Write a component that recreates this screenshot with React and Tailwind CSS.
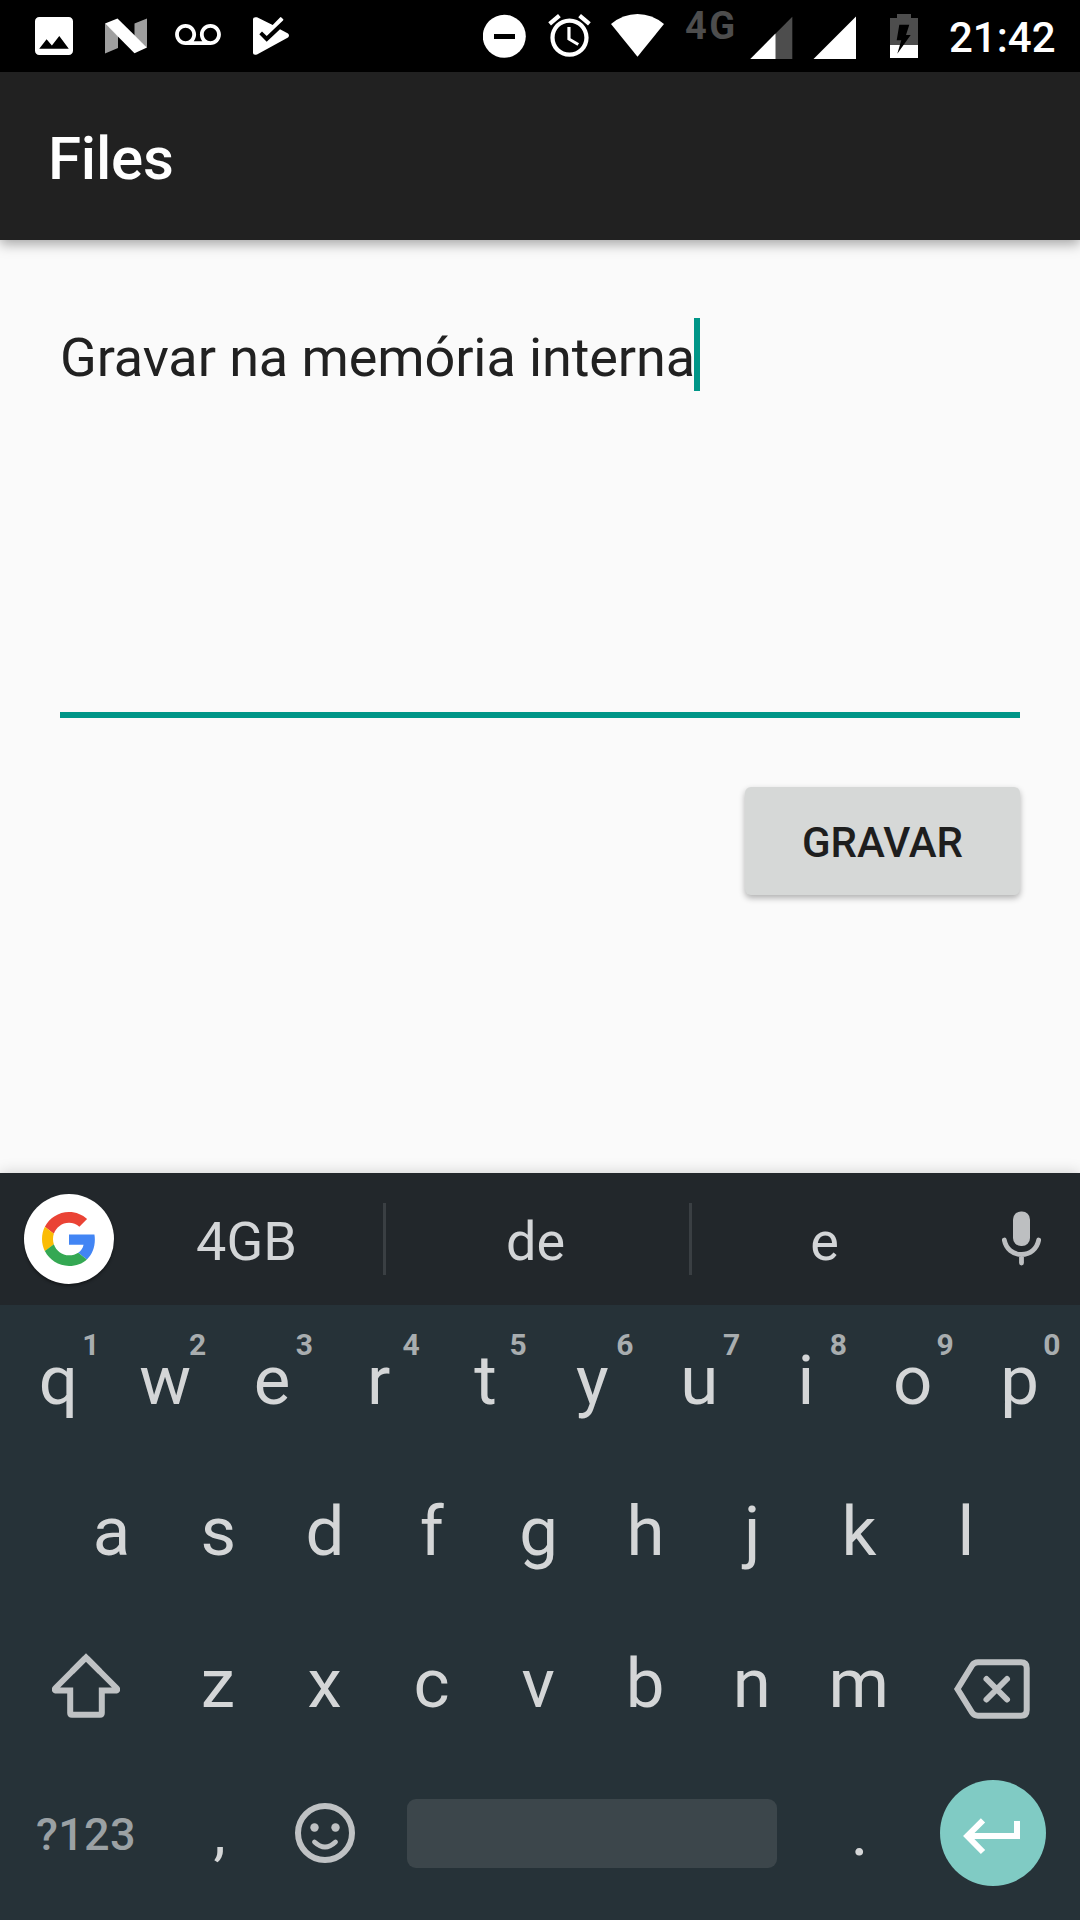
import React from "react";

const ROW1 = ["q", "w", "e", "r", "t", "y", "u", "i", "o", "p"];
const HINTS = ["1", "2", "3", "4", "5", "6", "7", "8", "9", "0"];
const ROW2 = ["a", "s", "d", "f", "g", "h", "j", "k", "l"];
const ROW3 = ["z", "x", "c", "v", "b", "n", "m"];

function StatusBar() {
  return (
    <div className="flex h-[72px] w-full items-start bg-black text-white">
      <svg className="mt-[17px] ml-[35px] size-[38px] shrink-0" viewBox="3 3 18 18" fill="#fff">
        <path d="M21 19V5c0-1.1-.9-2-2-2H5c-1.1 0-2 .9-2 2v14c0 1.1.9 2 2 2h14c1.1 0 2-.9 2-2zM8.500 13.500l2.500 3.010L14.500 12l4.500 6H5l3.500-4.500z" />
      </svg>
      <svg className="mt-[18px] ml-[32px] h-[36px] w-[42px] shrink-0" viewBox="0 0 42 36">
        <path d="M0 5.500L13 18v12L0 35.500zM29.500 5.500L42 .5v29L29.500 18z" fill="#9e9e9e" />
        <path d="M0 5.500L12.500 .5L42 29.500L29.500 35.300z" fill="#fff" />
      </svg>
      <svg className="mt-[24px] ml-[28px] h-[21px] w-[46px] shrink-0" viewBox="0 6 24 11" fill="#fff">
        <path d="M18.500 6C15.460 6 13 8.460 13 11.500c0 1.330.47 2.550 1.260 3.500H9.740c.79-.95 1.260-2.170 1.260-3.500C11 8.460 8.540 6 5.500 6S0 8.460 0 11.500 2.460 17 5.500 17h13c3.040 0 5.500-2.460 5.500-5.500S21.540 6 18.500 6zm-13 9C3.570 15 2 13.430 2 11.500S3.570 8 5.500 8 9 9.570 9 11.500 7.430 15 5.500 15zm13 0c-1.930 0-3.500-1.570-3.500-3.500S16.570 8 18.500 8 22 9.570 22 11.500 20.430 15 18.500 15z" />
      </svg>
      <svg className="mt-[17px] ml-[32px] h-[38px] w-[37px] shrink-0" viewBox="0 0 37 38">
        <path d="M0 2Q0 -.3 4 .3L19.700 8L27 .5Q27.700 -.3 28.400 .5L30 2Q30.700 2.700 30 3.400L13.700 19L9 14.500L6.300 17.200L13.700 24.700L27 12.300L35 16.500Q37 18.500 35 20.500L4 37.500Q0 38.500 0 36z" fill="#fff" />
      </svg>
      <svg className="mt-[14px] ml-[193px] size-[44px] shrink-0" viewBox="0 0 44 44">
        <circle cx="21.300" cy="22.300" r="21.500" fill="#fff" />
        <path d="M11 20h21v5H11z" fill="#000" />
      </svg>
      <svg className="mt-[10px] ml-[17px] size-[51px] shrink-0" viewBox="0 0 24 24" fill="#fff">
        <path d="M22 5.720l-4.600-3.860-1.290 1.530 4.600 3.860L22 5.720zM7.880 3.390L6.600 1.860 2 5.710l1.290 1.530 4.590-3.850zM12.500 8H11v6l4.750 2.850.75-1.230-4-2.370V8zM12 4c-4.970 0-9 4.030-9 9s4.020 9 9 9c4.970 0 9-4.030 9-9s-4.030-9-9-9zm0 16c-3.870 0-7-3.130-7-7s3.130-7 7-7 7 3.130 7 7-3.130 7-7 7z" />
      </svg>
      <svg className="mt-[14px] ml-[16px] h-[43px] w-[53px] shrink-0" viewBox="0 0 53 43">
        <path d="M0 10Q12 0 26.500 0T53 10L26.500 42.800z" fill="#fff" />
      </svg>
      <span className="mt-[4px] ml-[21px] w-[64px] shrink-0 text-[38px] leading-[45px] font-bold tracking-[2.500px] text-[#4d4d4d]">4G</span>
      <svg className="mt-[16px] h-[43px] w-[44px] shrink-0" viewBox="0 0 44 43">
        <path d="M1.300 43L43.300 .7V43z" fill="#4d4d4d" />
        <path d="M1.300 43L26.500 17.500V43z" fill="#fff" />
      </svg>
      <svg className="mt-[16px] ml-[20px] h-[43px] w-[43px] shrink-0" viewBox="0 0 43 43">
        <path d="M.5 43L43 .5V43z" fill="#fff" />
      </svg>
      <svg className="mt-[14px] ml-[34px] h-[44px] w-[28px] shrink-0" viewBox="0 0 28 44">
        <path d="M0 4h7V0h14v4h7v27H0z" fill="#4d4d4d" />
        <path d="M0 31h28v13H0z" fill="#fff" />
        <path d="M9.300 10.700H19.300L16 21H20.700L7.300 39.700L11.300 26.300H6.700z" fill="#000" />
      </svg>
      <span className="mt-[13px] ml-[31px] text-[42px] leading-[50px] font-medium">21:42</span>
    </div>
  );
}

function GoogleG() {
  return (
    <svg className="h-[54px] w-[54px]" viewBox="0 0 48 48">
      <path fill="#EA4335" d="M24 9.500c3.540 0 6.710 1.220 9.210 3.600l6.850-6.850C35.900 2.380 30.470 0 24 0 14.620 0 6.510 5.380 2.560 13.220l7.980 6.190C12.430 13.720 17.740 9.500 24 9.500z" />
      <path fill="#4285F4" d="M46.980 24.550c0-1.570-.15-3.090-.38-4.550H24v9.020h12.940c-.58 2.960-2.260 5.480-4.780 7.180l7.730 6c4.510-4.180 7.090-10.360 7.090-17.650z" />
      <path fill="#FBBC05" d="M10.530 28.590c-.48-1.450-.76-2.990-.76-4.590s.27-3.140.76-4.590l-7.980-6.190C.92 16.460 0 20.120 0 24c0 3.880.92 7.540 2.560 10.780l7.970-6.190z" />
      <path fill="#34A853" d="M24 48c6.480 0 11.930-2.130 15.890-5.810l-7.730-6c-2.150 1.450-4.920 2.300-8.160 2.300-6.260 0-11.570-4.220-13.470-9.910l-7.980 6.190C6.510 42.620 14.620 48 24 48z" />
    </svg>
  );
}

function Suggestions() {
  return (
    <div className="flex h-[132px] items-center bg-[#22272b] pl-[24px] text-[54px] leading-[64px] text-[#d3d5d7]">
      <div className="flex size-[90px] shrink-0 items-center justify-center rounded-full bg-white shadow-[0_2px_3px_rgba(0,0,0,0.4)]">
        <GoogleG />
      </div>
      <span className="mt-[5px] w-[269px] shrink-0 pr-[4px] text-center">4GB</span>
      <div className="h-[72px] w-[3px] shrink-0 bg-[#3a3f43]" />
      <span className="mt-[5px] w-[303px] shrink-0 pr-[4px] text-center">de</span>
      <div className="h-[72px] w-[3px] shrink-0 bg-[#3a3f43]" />
      <span className="mt-[5px] w-[265px] shrink-0 text-center">e</span>
      <svg className="-mt-px ml-[45px] h-[55px] w-[39px] shrink-0" viewBox="0 0 39 55" fill="none">
        <rect x="11" y="0.500" width="17" height="34.500" rx="8" fill="#bdbfc1" />
        <path d="M2.300 29C4 38 11 43.500 19.500 43.500S35 38 36.700 29M19.500 43.500V52" stroke="#bdbfc1" strokeWidth="4.800" strokeLinecap="round" />
      </svg>
    </div>
  );
}

function Key({ label, hint }) {
  return (
    <div className="relative flex h-[151px] w-[106.8px] shrink-0 justify-center">
      <span>{label}</span>
      {hint && (
        <span className="absolute top-[13px] right-[11px] w-[20px] text-center text-[30px] leading-[28px] font-bold text-[#a8adaf]">
          {hint}
        </span>
      )}
    </div>
  );
}

function Keyboard() {
  return (
    <div className="flex h-[747px] flex-col bg-[#263238] text-[#d4d6d7] shadow-[0_0_14px_rgba(0,0,0,0.18)]">
      <Suggestions />
      <div className="flex h-[151px] px-[5px] pt-[13px] text-[69px] leading-[126px]">
        {ROW1.map((k, i) => (
          <Key key={k} label={k} hint={HINTS[i]} />
        ))}
      </div>
      <div className="flex h-[152px] px-[58px] pt-[13px] text-[69px] leading-[126px]">
        {ROW2.map((k) => (
          <Key key={k} label={k} />
        ))}
      </div>
      <div className="flex h-[151px] pt-[13px] text-[69px] leading-[126px]">
        <svg className="mt-[31px] mr-[44.5px] ml-[52px] h-[66px] w-[68px] shrink-0" viewBox="52 1652 68 66" fill="none" stroke="#bfc2c4" strokeWidth="6">
          <path d="M72 1671.500L86 1657.500L100 1671.500" />
          <path d="M85 1658.500L56 1687.500Q53 1690.500 57 1690.500H70.200V1713Q70.200 1714.700 72 1714.700H100Q101.800 1714.700 101.800 1713V1690.500H115Q119 1690.500 116 1687.500L87 1658.500" />
        </svg>
        {ROW3.map((k) => (
          <Key key={k} label={k} />
        ))}
        <svg className="mt-[37px] ml-[40.5px] h-[62px] w-[78px] shrink-0" viewBox="953 1658 78 62" fill="none" stroke="#bfc2c4" strokeWidth="6">
          <path d="M957.500 1689L972 1665.500Q974 1662.300 978 1662.300H1021Q1026.700 1662.300 1026.700 1668V1710Q1026.700 1715.700 1021 1715.700H978Q974 1715.700 972 1712.500z" />
          <path d="M986.500 1679L1007 1699.500M1007 1679L986.500 1699.500" strokeLinecap="round" />
        </svg>
      </div>
      <div className="flex h-[161px] items-start">
        <span className="mt-[49px] ml-[36px] w-[129px] shrink-0 text-[45px] leading-[54px] font-medium tracking-[0.3px] text-[#9ba1a4]">?123</span>
        <span className="mt-[11px] w-[107px] shrink-0 pl-[2px] text-center text-[62px] leading-[126px]">,</span>
        <svg className="mt-[43px] ml-[22px] size-[62px] shrink-0" viewBox="0 0 62 62" fill="none" stroke="#bfc2c4">
          <circle cx="31" cy="31" r="27" strokeWidth="6" />
          <path d="M20.500 40Q31 50 41.500 40" strokeWidth="4.800" strokeLinecap="round" />
          <circle cx="20.500" cy="25.500" r="4.200" fill="#bfc2c4" stroke="none" />
          <circle cx="41.500" cy="25.500" r="4.200" fill="#bfc2c4" stroke="none" />
        </svg>
        <div className="mt-[40px] ml-[51px] h-[69px] w-[370px] shrink-0 rounded-[9px] bg-[#3c464b]" />
        <span className="mt-[10px] ml-[29px] w-[107px] shrink-0 text-center text-[69px] leading-[126px]">.</span>
        <div className="mt-[21px] ml-[27px] size-[106px] shrink-0 rounded-full bg-[#80cbc4]">
          <svg className="size-[106px]" viewBox="940 1780 106 106" fill="none" stroke="#fff" strokeWidth="6">
            <path d="M1017 1821V1836H968M983 1820.300L967.300 1836L983 1852" />
          </svg>
        </div>
      </div>
    </div>
  );
}

export default function App() {
  return (
    <div className="flex h-[1920px] w-[1080px] flex-col overflow-hidden bg-[#fafafa] font-[Roboto,sans-serif]">
      <StatusBar />
      <header className="z-10 flex h-[168px] shrink-0 items-center bg-[#212121] pl-[48px] shadow-[0_4px_12px_rgba(0,0,0,0.35)]">
        <h1 className="mt-[6px] text-[60px] leading-[70px] font-medium tracking-[-0.2px] text-white">Files</h1>
      </header>
      <main className="flex h-[933px] shrink-0 flex-col px-[60px] pt-[78px]">
        <div className="flex h-[400px] items-start border-b-[6px] border-[#009688]">
          <span className="mt-[8px] w-[634px] shrink-0 text-[54px] leading-[64px] tracking-[-0.1px] whitespace-nowrap text-[#212121]">
            Gravar na memória interna
          </span>
          <div className="h-[73px] w-[6px] bg-[#009688]" />
        </div>
        <button className="mt-[69px] flex h-[108px] w-[275px] items-center justify-center self-end rounded-[6px] bg-[#d6d8d7] pt-[4px] text-[42px] leading-[50px] font-medium text-[#1e1e1e] shadow-[0_3px_6px_rgba(0,0,0,0.3)]">
          GRAVAR
        </button>
      </main>
      <Keyboard />
    </div>
  );
}
